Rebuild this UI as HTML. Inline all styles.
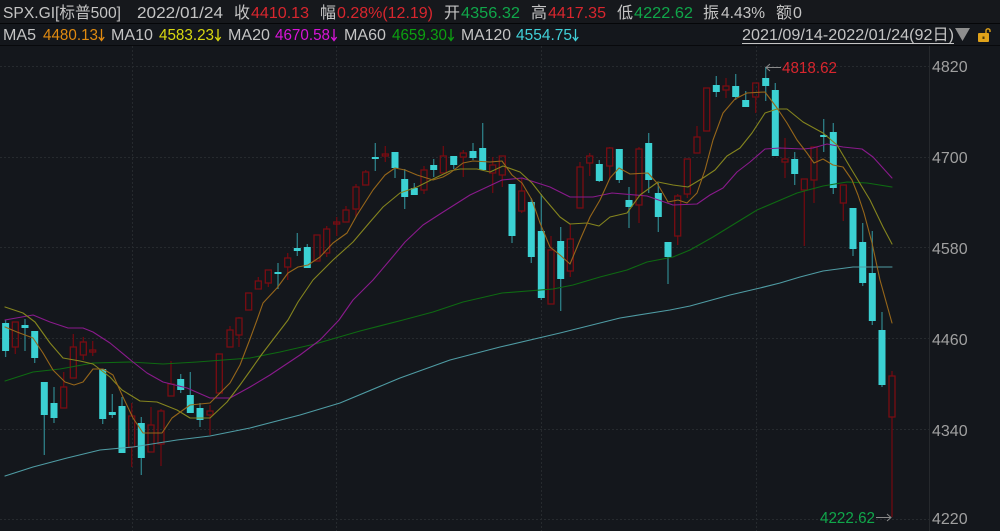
<!DOCTYPE html>
<html><head><meta charset="utf-8">
<style>
html,body{margin:0;padding:0;background:#14171c;width:1000px;height:531px;overflow:hidden}
svg{display:block}
text{font-family:"Liberation Sans","Noto Sans CJK SC",sans-serif;font-size:16px;fill:#c4c4c4}
.r{fill:#d8262e}.g{fill:#10a64a}.a{fill:#a0a0a0}
</style></head><body>
<svg width="1000" height="531" viewBox="0 0 1000 531" xmlns="http://www.w3.org/2000/svg">
<rect width="1000" height="531" fill="#14171c"/>
<rect width="1000" height="23" fill="#16181c"/>
<path d="M0 23.5H1000" stroke="#050608" stroke-width="1"/>
<path d="M0 45.5H1000" stroke="#08090c" stroke-width="1"/>
<g stroke="#262a2e" stroke-width="1" stroke-dasharray="2 2" fill="none">
<path d="M0 66.5H929M0 157.5H929M0 247.5H929M0 338.5H929M0 429.5H929M0 519.5H929"/>
<path d="M132.5 46V531M336.5 46V531M541.5 46V531M756.5 46V531"/>
</g>
<path d="M929.5 46V531" stroke="#26292d" stroke-width="1"/>

<!-- cyan wicks -->
<path fill="none" stroke="#2d7e86" stroke-width="1.3" d="M5.6 320V357M25 319V351M34.7 331V363M44.3 382V455M54 387V423M102.7 369V424M112.3 394V418M122 397V453M141.3 417V475M180.7 374V393M190.3 372V413M200 403V427M278 263V289M297.3 233V256M307.3 244V268M375.3 143V171M395 152V178M404.7 169V209M414.3 183V195M433.7 159V177M453.7 156V169M473 143V160M482.7 123V170M512 184V243M531.3 198V263M541.3 194V300M560.7 227V311M599.3 160V182M619.3 149V183M629 187V228M648.7 133V193M658.3 183V232M668 242V284M716.3 76V97M735.7 74V100M745.7 91V107M765.7 67V101M775.3 83V156M794.7 152V185M823.7 119V152M833.3 123V194M853 208V256M862.7 223V286M872.3 231V325M882 312V387"/>
<!-- red wicks -->
<path fill="none" stroke="#6e0a10" stroke-width="1.3" d="M15.3 347V354M63.7 372V387M73.3 334V347M83.3 337V342M83.3 355V360M92.7 341V356M131.7 403V416M131.7 447V467M151 407V425M161 409V411M161 444V466M171 361V384M210 405V411M210 415V435M230 326V330M239 317V318M239 335V347M258.3 277V281M268.3 283V287M287.7 253V258M287.7 267V280M326.7 226V229M326.7 253V257M336.7 217V236M346 206V210M356 184V187M356 209V217M365.7 170V172M385.3 146V162M424 166V170M424 190V194M443.3 146V156M463.3 150V153M463.3 157V177M492.7 157V165M492.7 173V193M502.3 175V187M521.7 178V191M521.7 211V213M551 236V250M570.3 224V239M570.3 271V277M580 162V167M589.7 153V156M589.7 163V176M609.7 147V148M609.7 166V180M639 147V149M639 205V223M677.7 194V196M677.7 236V245M687.3 194V198M697 126V137M726 78V86M726 90V98M755.7 97V113M785 138V159M785 162V178M804.3 190V246M814 180V203M843.3 203V221M892 371V376M892 417V517"/>
<!-- red bodies -->
<path fill="none" stroke="#7a0c12" stroke-width="1.3" d="M12.3 322h6v25h-6zM60.7 387h6v21h-6zM70.3 347h6v31h-6zM80.3 342h6v13h-6zM89.7 350h6v2h-6zM128.7 416h6v31h-6zM148 425h6v27h-6zM158 411h6v33h-6zM168 384h6v12h-6zM207 411h6v4h-6zM216.3 354h6v39h-6zM227 330h6v17h-6zM236 318h6v17h-6zM245.7 293h6v17h-6zM255.3 281h6v8h-6zM265.3 270h6v13h-6zM284.7 258h6v9h-6zM314 235h6v26h-6zM323.7 229h6v24h-6zM333.7 222h6v2h-6zM343 210h6v12h-6zM353 187h6v22h-6zM362.7 172h6v13h-6zM382.3 154h6v2h-6zM421 170h6v20h-6zM440.3 156h6v17h-6zM460.3 153h6v4h-6zM489.7 165h6v8h-6zM499.3 156h6v19h-6zM518.7 191h6v20h-6zM548 250h6v54h-6zM567.3 239h6v32h-6zM577 167h6v41h-6zM586.7 156h6v7h-6zM606.7 148h6v18h-6zM636 149h6v56h-6zM674.7 196h6v40h-6zM684.3 159h6v35h-6zM694 137h6v16h-6zM703.7 88h6v43h-6zM723 86h6v4h-6zM752.7 83h6v14h-6zM782 159h6v3h-6zM801.3 179h6v11h-6zM811 147h6v33h-6zM840.3 185h6v18h-6zM889 376h6v41h-6z"/>
<!-- cyan bodies -->
<path fill="#3bd1d3" d="M2.1 323h7v28h-7zM21.5 325h7v3h-7zM31.2 331h7v27h-7zM40.8 382h7v33h-7zM50.5 403h7v15h-7zM99.2 369h7v50h-7zM108.8 412h7v3h-7zM118.5 406h7v47h-7zM137.8 423h7v35h-7zM177.2 379h7v11h-7zM186.8 395h7v18h-7zM196.5 408h7v12h-7zM274.5 272h7v2h-7zM293.8 248h7v3h-7zM303.8 247h7v21h-7zM371.8 157h7v2h-7zM391.5 152h7v16h-7zM401.2 179h7v18h-7zM410.8 188h7v7h-7zM430.2 165h7v5h-7zM450.2 156h7v9h-7zM469.5 151h7v7h-7zM479.2 148h7v22h-7zM508.5 184h7v52h-7zM527.8 202h7v55h-7zM537.8 231h7v67h-7zM557.2 241h7v38h-7zM595.8 164h7v17h-7zM615.8 149h7v31h-7zM625.5 200h7v7h-7zM645.2 143h7v37h-7zM654.8 193h7v24h-7zM664.5 242h7v15h-7zM712.8 85h7v7h-7zM732.2 86h7v11h-7zM742.2 100h7v7h-7zM762.2 78h7v8h-7zM771.8 90h7v66h-7zM791.2 159h7v15h-7zM820.2 135h7v2h-7zM829.8 132h7v56h-7zM849.5 208h7v41h-7zM859.2 242h7v41h-7zM868.8 273h7v48h-7zM878.5 330h7v55h-7z"/>

<!-- MA lines -->
<g fill="none" stroke-width="1.1" stroke-linejoin="round" stroke-linecap="round">
<polyline stroke="#4f9ca4" points="5,476 33,467 67,458 100,450 133,447 177,440 210,436 250,428 300,415 340,403 400,378 450,360 500,347 560,333 620,318 670,310 690,306 730,295 760,288 780,283 800,277 823,271 853,267 892,267"/>
<polyline stroke="#0e6a12" points="5,381 33,372 60,369 93,363 130,362 163,364 197,362 250,358 280,352 315,344 360,331 403,320 433,312 463,302 502,293 553,289 573,285 600,277 627,270 647,262 673,257 690,250 713,237 757,210 797,193 823,186 847,182 867,183 892,187"/>
<polyline stroke="#8a1a8c" points="5,320 33,315 50,322 68,328 83,328 93,332 110,343 133,362 147,373 163,382 187,388 210,398 230,398 250,387 270,375 300,355 320,340 339,320 353,300 373,280 390,260 405,242 423,225 440,214 470,195 502,180 522,178 550,187 570,197 593,197 612,193 647,196 673,205 697,204 710,195 723,188 737,172 750,162 765,149 780,148 803,149 813,148 827,144 843,147 862,149 873,157 892,178"/>
<polyline stroke="#85851e" points="5,307 23,313 35,322 50,343 63,358 80,361 93,364 110,377 122,390 140,401 157,402 177,410 190,418 210,418 227,402 240,385 250,371 262,354 275,337 288,320 298,302 313,280 333,260 353,242 370,222 383,207 400,193 417,187 433,179 450,171 460,169 477,169 490,172 503,166 520,172 532,183 543,197 560,217 570,224 587,223 599,226 610,217 627,213 640,195 658,182 673,185 688,187 703,178 715,170 727,156 740,148 752,133 765,113 777,109 787,109 803,122 823,133 837,145 850,167 870,200 883,227 892,244"/>
<polyline stroke="#96661a" points="5,327 17,332 33,338 43,353 53,370 65,382 74,385 83,382 93,369 103,369 113,375 123,397 133,418 143,433 162,433 172,418 190,405 210,403 230,383 240,365 250,339 257,320 263,303 277,288 288,273 298,267 308,265 320,257 333,243 347,233 357,215 373,190 385,175 395,168 405,170 417,175 433,180 443,177 450,173 463,163 473,161 490,162 502,161 512,175 522,183 532,200 540,223 550,247 560,255 570,264 580,240 590,217 600,200 610,178 619,168 630,174 648,173 657,183 668,202 678,200 687,203 697,193 705,170 713,140 723,113 735,99 747,93 765,92 777,108 787,123 797,140 807,153 814,163 823,159 833,165 843,167 852,180 858,195 864,213 872,243 880,280 892,323"/>
</g>

<!-- Header row 1 -->
<text x="3" y="18" textLength="118" lengthAdjust="spacingAndGlyphs">SPX.GI[标普500]</text>
<text x="137" y="18" textLength="86" lengthAdjust="spacingAndGlyphs">2022/01/24</text>
<text x="234" y="18">收</text><text x="251" y="18" class="r" textLength="58" lengthAdjust="spacingAndGlyphs">4410.13</text>
<text x="320" y="18">幅</text><text x="337" y="18" class="r" textLength="96" lengthAdjust="spacingAndGlyphs">0.28%(12.19)</text>
<text x="444" y="18">开</text><text x="461" y="18" class="g" textLength="59" lengthAdjust="spacingAndGlyphs">4356.32</text>
<text x="531" y="18">高</text><text x="548" y="18" class="r" textLength="58" lengthAdjust="spacingAndGlyphs">4417.35</text>
<text x="617" y="18">低</text><text x="634" y="18" class="g" textLength="59" lengthAdjust="spacingAndGlyphs">4222.62</text>
<text x="703" y="18">振</text><text x="721" y="18" textLength="44" lengthAdjust="spacingAndGlyphs">4.43%</text>
<text x="776" y="18">额</text><text x="793" y="18">0</text>

<!-- Header row 2 -->
<text x="3" y="40" textLength="33" lengthAdjust="spacingAndGlyphs">MA5</text>
<text x="43" y="40" style="fill:#e08a10" textLength="55" lengthAdjust="spacingAndGlyphs">4480.13</text>
<text x="111" y="40" textLength="42" lengthAdjust="spacingAndGlyphs">MA10</text>
<text x="159" y="40" style="fill:#d8d810" textLength="55" lengthAdjust="spacingAndGlyphs">4583.23</text>
<text x="228" y="40" textLength="42" lengthAdjust="spacingAndGlyphs">MA20</text>
<text x="275" y="40" style="fill:#d814d8" textLength="55" lengthAdjust="spacingAndGlyphs">4670.58</text>
<text x="344" y="40" textLength="42" lengthAdjust="spacingAndGlyphs">MA60</text>
<text x="392" y="40" style="fill:#0ca010" textLength="55" lengthAdjust="spacingAndGlyphs">4659.30</text>
<text x="461" y="40" textLength="50" lengthAdjust="spacingAndGlyphs">MA120</text>
<text x="516" y="40" style="fill:#40d0d8" textLength="56" lengthAdjust="spacingAndGlyphs">4554.75</text>
<text x="742" y="40" textLength="212" lengthAdjust="spacingAndGlyphs">2021/09/14-2022/01/24(92日)</text>
<!-- down arrows -->
<g fill="none" stroke-width="1.3">
<path stroke="#e08a10" d="M101.5 29V40M98.8 37L101.5 40.5L104.2 37"/>
<path stroke="#d8d810" d="M218 29V40M215.3 37L218 40.5L220.7 37"/>
<path stroke="#d814d8" d="M334 29V40M331.3 37L334 40.5L336.7 37"/>
<path stroke="#0ca010" d="M451 29V40M448.3 37L451 40.5L453.7 37"/>
<path stroke="#40d0d8" d="M575.5 29V40M572.8 37L575.5 40.5L578.2 37"/>
</g>
<path d="M742 43.5H954" stroke="#c4c4c4" stroke-width="1"/>
<path d="M955 28H970L962.5 41Z" fill="#8e8e8e"/>
<rect x="978" y="33" width="11" height="9" rx="1" fill="#e0a21a"/>
<rect x="982.5" y="36.5" width="2" height="2.5" fill="#4a3606"/>
<path d="M986 33V30.5C986 28.3 990 28.3 990 30.5V32" fill="none" stroke="#e0a21a" stroke-width="1.4"/>

<!-- axis labels -->
<text x="932" y="72" class="a">4820</text>
<text x="932" y="163" class="a">4700</text>
<text x="932" y="254" class="a">4580</text>
<text x="932" y="345" class="a">4460</text>
<text x="932" y="436" class="a">4340</text>
<text x="932" y="524" class="a">4220</text>

<!-- extreme labels -->
<text x="782" y="73" class="r" textLength="55" lengthAdjust="spacingAndGlyphs">4818.62</text>
<path d="M781 67.5H766M770 64L766 67.5L770 71" fill="none" stroke="#8a8a8a" stroke-width="1"/>
<text x="820" y="523" class="g" textLength="55" lengthAdjust="spacingAndGlyphs">4222.62</text>
<path d="M876 517.5H891M887 514L891 517.5L887 521" fill="none" stroke="#8a8a8a" stroke-width="1"/>
</svg>
</body></html>
